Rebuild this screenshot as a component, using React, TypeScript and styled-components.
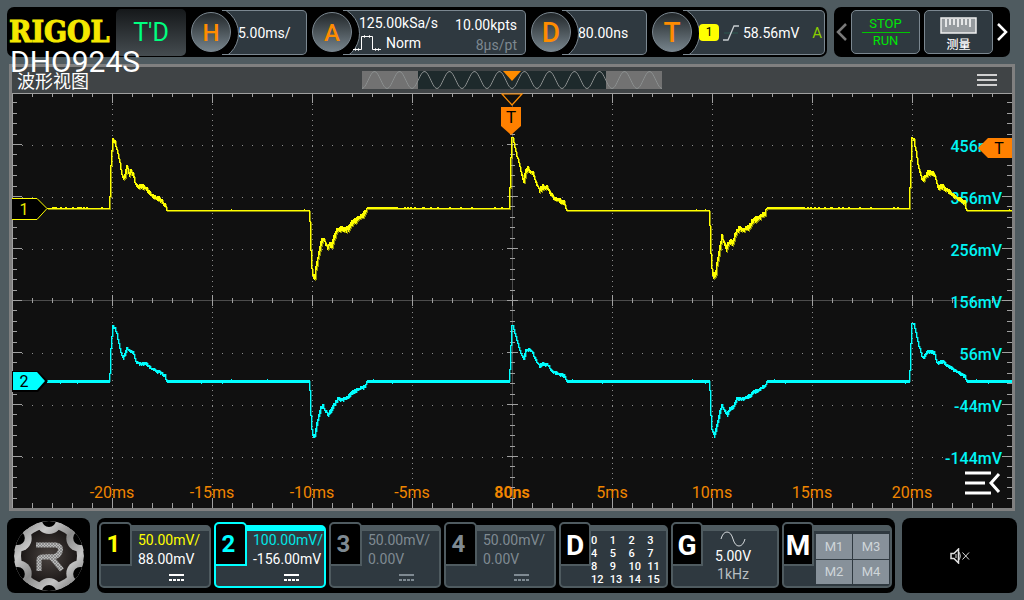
import React from "react";
import styled, { createGlobalStyle } from "styled-components";

const GlobalStyle = createGlobalStyle`
  * { box-sizing: border-box; }
  body {
    margin: 0;
    background: #4f5b60;
    color: #fff;
    font-family: Roboto, "Noto Sans CJK SC", sans-serif;
    font-size: 14px;
  }
  button {
    margin: 0;
    padding: 0;
    border: 0;
    background: none;
    color: inherit;
    font: inherit;
    text-align: left;
    cursor: pointer;
  }
  svg { display: block; flex: none; }
`;

const ORANGE = "#ff8c00";
const PANEL = "#2f3940";
const EDGE = "#7b8790";
const FRAME = "#4f5b60";

/* ---------- page ---------- */

const Page = styled.div`
  min-width: 1000px;
  padding: 7px;
  display: flex;
  flex-direction: column;
  gap: 7px;
`;

const TopRow = styled.header`
  display: flex;
  gap: 7px;
  padding-right: 7px;
`;

const StatusBar = styled.div`
  flex: 1;
  min-width: 0;
  display: flex;
  align-items: center;
  gap: 5px;
  height: 50px;
  padding-right: 2px;
  background: #000;
  border-radius: 7px;
`;

const Brand = styled.div`
  position: relative;
  width: 104px;
  padding-left: 2px;
  font: bold 30px/36px "DejaVu Serif Condensed", "DejaVu Serif", serif;
  font-stretch: condensed;
  color: #f4e800;
  -webkit-text-stroke: 1px #f4e800;
`;

const Model = styled.span`
  position: absolute;
  z-index: 2;
  top: 33px;
  left: 3px;
  font: 400 30px/30px Roboto, sans-serif;
  color: #fff;
  -webkit-text-stroke: 0;
`;

const TriggerState = styled.button`
  width: 70px;
  height: 47px;
  border-radius: 5px;
  background: linear-gradient(#15181a, #454c50);
  color: #00ff7f;
  font-size: 25px;
  text-align: center;
`;

const SegmentButton = styled.button<{ $grow: number }>`
  flex: ${(p) => p.$grow} 1 0;
  min-width: 0;
  display: flex;
  align-items: center;
`;

const Knob = styled.span<{ $size: number }>`
  position: relative;
  z-index: 1;
  flex: none;
  width: 40px;
  height: 40px;
  border: 1px solid ${EDGE};
  border-radius: 50%;
  background: linear-gradient(#22272a, #76838b);
  color: ${ORANGE};
  font-size: ${(p) => p.$size}px;
  font-weight: 500;
  line-height: 40px;
  text-align: center;
`;

const Field = styled.span`
  position: relative;
  flex: 1;
  min-width: 0;
  height: 45px;
  margin-left: -9px;
  padding: 1px 8px 0 16px;
  display: flex;
  align-items: center;
  justify-content: space-between;
  overflow: hidden;
  background: ${PANEL};
  border: 1px solid ${EDGE};
  border-left: 0;
  border-radius: 0 5px 5px 0;
  white-space: nowrap;

  &::before {
    content: "";
    position: absolute;
    top: -5px;
    left: -38px;
    width: 53px;
    height: 53px;
    border: 1px solid ${EDGE};
    border-radius: 50%;
    background: #000;
  }
`;

const Readings = styled.span<{ $end?: boolean }>`
  position: relative;
  display: flex;
  flex-direction: column;
  align-items: ${(p) => (p.$end ? "flex-end" : "flex-start")};
  padding-top: ${(p) => (p.$end ? 4 : 0)}px;
  line-height: 20px;
`;

const ModeLine = styled.span`
  display: flex;
  align-items: center;
  gap: 5px;
  margin-left: -6px;
`;

const Dim = styled.span`
  color: #7d8890;
`;

const SourceTag = styled.span`
  position: relative;
  width: 20px;
  height: 17px;
  border-radius: 4px;
  background: #ff0;
  color: #000;
  font-size: 12px;
  line-height: 17px;
  text-align: center;
`;

const SweepMode = styled.span`
  margin-left: auto;
  color: #8ccc00;
  font-size: 15px;
`;

const TriggerField = styled(Field)`
  padding-right: 2px;
  justify-content: flex-start;
  gap: 4px;
`;

const ActionBar = styled.nav`
  flex: 0 0 176px;
  height: 50px;
  display: flex;
  align-items: center;
  gap: 4px;
  padding: 0 2px;
  background: #000;
  border-radius: 7px;
`;

const ActionButton = styled.button`
  flex: 1;
  height: 44px;
  padding-top: 6px;
  display: flex;
  flex-direction: column;
  align-items: center;
  justify-content: center;
  gap: 3px;
  border: 1px solid ${EDGE};
  border-radius: 5px;
  background: ${PANEL};
  font-size: 12px;
  font-weight: 500;
  line-height: 16px;
`;

const RunButton = styled(ActionButton)`
  padding-top: 1px;
  gap: 0;
  color: #00e606;
  font-size: 13px;
  font-weight: 400;
`;

const RunRule = styled.span`
  width: 48px;
  height: 1px;
  background: #00c800;
`;

/* ---------- waveform panel ---------- */

const Scope = styled.main`
  margin: 0 2px;
  border: 3px solid #808080;
  background: #101010;
`;

const ScopeHead = styled.div`
  height: 26px;
  display: grid;
  grid-template-columns: 1fr 300px 1fr;
  align-items: center;
  background: #404446;
`;

const ScopeTitle = styled.h1`
  margin: 0;
  padding-left: 5px;
  font: 400 18px/26px "Noto Sans CJK SC", sans-serif;
`;

const HeadMenu = styled.button`
  justify-self: end;
  padding-right: 15px;
`;

const Plot = styled.div`
  position: relative;
`;

const PlotMenu = styled.button`
  position: absolute;
  right: 11px;
  bottom: 12px;
`;

/* ---------- bottom row ---------- */

const BottomRow = styled.footer`
  display: flex;
  gap: 7px;
  height: 75px;
`;

const Tile = styled.button<{ $width: number }>`
  flex: 0 0 ${(p) => p.$width}px;
  display: flex;
  align-items: center;
  justify-content: center;
  border-radius: 8px;
  background: #000;
`;

const Channels = styled.div`
  flex: 1;
  display: grid;
  grid-template-columns: repeat(4, 112fr) 109fr 108fr 110fr;
  gap: 3px;
  padding: 4px 3px 5px 2px;
  border-radius: 8px;
  background: #000;
`;

const Card = styled.button<{ $edge?: string }>`
  position: relative;
  min-width: 0;
  padding-top: 3px;
  display: flex;
  --edge: ${(p) => p.$edge ?? FRAME};
`;

const CardTab = styled.span<{ $color: string; $large?: boolean }>`
  position: absolute;
  top: 0;
  left: 0;
  width: ${(p) => (p.$large ? 32 : 33)}px;
  height: 44px;
  padding-right: ${(p) => (p.$large ? 0 : 4)}px;
  border: 2px solid var(--edge);
  border-radius: 5px 5px 0 0;
  background: #000;
  color: ${(p) => p.$color};
  font-size: ${(p) => (p.$large ? 28 : 24)}px;
  font-weight: 700;
  line-height: ${(p) => (p.$large ? 44 : 40)}px;
  text-align: center;
`;

const CardBody = styled.span`
  flex: 1;
  min-width: 0;
  height: 63px;
  border: 2px solid var(--edge);
  border-top-width: 6px;
  border-radius: 5px;
  background: ${PANEL};
  line-height: 19px;
  white-space: nowrap;
`;

const ChannelBody = styled(CardBody)`
  padding-left: 37px;
  display: flex;
  flex-direction: column;
`;

const Reading = styled.span<{ $color: string }>`
  color: ${(p) => p.$color};
`;

const Coupling = styled.span`
  padding: 4px 0 0 31px;
`;

const DigitalBody = styled(CardBody)`
  padding: 3px 0 0 30px;
  display: grid;
  grid-template-columns: repeat(4, 1fr);
  align-content: start;
  font-size: 11px;
  font-weight: 500;
  line-height: 13px;
`;

const GeneratorBody = styled(CardBody)`
  padding-left: 16px;
  display: flex;
  flex-direction: column;
  align-items: center;
  line-height: 18px;
`;

const MathBody = styled(CardBody)`
  padding: 3px 1px 2px 32px;
  display: grid;
  grid-template-columns: 1fr 1fr;
  gap: 1px;
`;

const MathCell = styled.span`
  display: flex;
  align-items: center;
  justify-content: center;
  background: #87919a;
  color: #cfd5d9;
  font-size: 13px;
`;

/* ---------- waveform data ---------- */

type Pt = [number, number];

const BASE1 = 115;
const BASE2 = 288;

/* Each burst is a list of (dx, dy) steps from the start of its edge. */
const yellowBursts: { at: number; pts: Pt[] }[] = [
  { at: 97, pts: [[0, 0], [1, -12], [2, -43], [3, -58], [4, -67], [6, -67], [7, -60], [9, -53], [11, -44], [12, -36], [14, -30], [16, -33], [18, -41], [19, -38], [20, -32], [22, -36], [24, -33], [26, -25], [29, -21], [33, -22], [37, -19], [41, -14], [45, -10], [50, -9], [54, -5], [57, -2], [58, 2]] },
  { at: 297, pts: [[0, 2], [1, 13], [2, 42], [3, 60], [4, 69], [6, 69], [7, 60], [9, 50], [11, 40], [13, 32], [15, 32], [18, 40], [20, 37], [23, 37], [25, 30], [28, 22], [32, 21], [35, 22], [39, 21], [43, 15], [49, 10], [54, 7], [57, 3], [58, 0]] },
  { at: 497, pts: [[0, 0], [1, -21], [2, -51], [3, -71], [4, -69], [7, -55], [10, -43], [12, -35], [14, -27], [15, -28], [17, -36], [19, -40], [21, -37], [24, -34], [27, -24], [30, -18], [34, -21], [38, -20], [42, -14], [46, -9], [51, -7], [55, -5], [57, 0], [58, 2]] },
  { at: 697, pts: [[0, 2], [1, 17], [2, 45], [3, 60], [4, 69], [7, 64], [9, 50], [11, 40], [13, 29], [15, 35], [17, 41], [19, 36], [22, 34], [24, 35], [27, 25], [30, 20], [34, 22], [39, 20], [44, 13], [51, 9], [56, 6], [57, 1], [58, 0]] },
  { at: 897, pts: [[0, 0], [1, -21], [2, -48], [3, -71], [5, -67], [7, -56], [9, -42], [12, -30], [14, -27], [16, -31], [19, -35], [23, -35], [26, -31], [29, -20], [34, -21], [38, -18], [42, -14], [47, -10], [52, -8], [56, -5], [57, 0], [58, 2]] },
];

const cyanBursts: { at: number; pts: Pt[] }[] = [
  { at: 97, pts: [[0, 0], [1, -8], [2, -33], [3, -45], [4, -54], [6, -53], [8, -46], [10, -36], [12, -27], [14, -23], [16, -27], [18, -33], [20, -30], [24, -28], [27, -19], [30, -17], [37, -17], [41, -13], [46, -10], [52, -8], [56, -5], [58, 0]] },
  { at: 297, pts: [[0, 0], [1, 9], [2, 34], [3, 48], [4, 55], [6, 55], [8, 43], [10, 34], [12, 27], [14, 25], [16, 30], [19, 34], [22, 30], [25, 24], [29, 18], [33, 19], [38, 17], [43, 12], [50, 8], [56, 6], [58, 0]] },
  { at: 497, pts: [[0, 0], [1, -12], [2, -36], [3, -56], [4, -54], [7, -44], [10, -32], [13, -24], [15, -23], [17, -30], [20, -32], [23, -29], [27, -20], [30, -15], [34, -17], [38, -16], [43, -10], [49, -7], [55, -5], [58, 0]] },
  { at: 697, pts: [[0, 0], [1, 9], [2, 34], [3, 48], [5, 55], [7, 49], [9, 40], [11, 31], [13, 25], [15, 29], [18, 34], [21, 28], [24, 27], [28, 18], [33, 18], [38, 17], [44, 12], [51, 8], [56, 5], [58, 0]] },
  { at: 897, pts: [[0, 0], [1, -11], [2, -38], [3, -58], [5, -56], [7, -48], [10, -34], [13, -24], [15, -23], [18, -29], [22, -29], [25, -28], [28, -18], [34, -19], [40, -14], [46, -10], [52, -7], [56, -4], [58, 0]] },
];

const noise = (n: number) => {
  const s = Math.sin(n * 12.9898) * 43758.5453;
  return s - Math.floor(s);
};

/* Steps one column at a time; the decaying part of each burst is drawn as
   short vertical bars whose length varies with the noise. */
function tracePath(base: number, bursts: { at: number; pts: Pt[] }[], settle: number, jitter: number) {
  let d = `M35 ${base}.5`;
  for (const burst of bursts) {
    const start = burst.at + 0.5;
    d += `H${start}`;
    for (let i = 1; i < burst.pts.length; i++) {
      const [x0, y0] = burst.pts[i - 1];
      const [x1, y1] = burst.pts[i];
      for (let x = x0 + 1; x <= x1; x++) {
        const y = Math.round(base + y0 + ((y1 - y0) * (x - x0)) / (x1 - x0));
        if (x > 3 && x < 57) {
          const up = 1 + Math.round(noise(burst.at + x) * jitter);
          const down = 1 + Math.round(noise(burst.at + x + 400) * jitter);
          d += `V${y - up}H${start + x}V${y + down}`;
        } else {
          d += `V${y}H${start + x}`;
        }
      }
    }
    const level = burst.pts[burst.pts.length - 1][1] > 0 ? settle : 0;
    d += `V${base + level}.5`;
  }
  return d + "H1000";
}

const yellowPath = tracePath(BASE1, yellowBursts, 2, 2);
const cyanPath = tracePath(BASE2, cyanBursts, 0, 1);

const yellowUp = [40, 42, 43, 48, 53, 60, 65, 67, 68, 71, 74, 89, 392, 395, 398, 402, 410, 411, 418, 425, 437, 448, 459, 482, 489, 795, 798, 802, 806, 812, 818, 819, 826, 830, 836, 847, 858, 881, 885];
const yellowLow = [219, 292, 684, 693, 970, 997];
const cyanUp = [219, 255, 361, 560, 680, 762, 964];
const cyanDown = [48, 65, 189, 210, 380, 590, 693, 773, 893, 976];

/* ---------- drawings ---------- */

const span = (n: number) => Array.from({ length: n }, (_, i) => i);
const ROWS = [51, 103, 155, 207, 259, 311, 363];

function Graticule() {
  let ticks = "";
  for (const i of span(51)) {
    const x = i * 20 + 0.5;
    const long = i % 5 === 0;
    ticks += `M${x} 0v${long ? 10 : 4}M${x} 415v${long ? -10 : -5}`;
    ticks += `M${x} ${long ? 202 : 205}v${long ? 11 : 5}`;
  }
  for (const i of span(41)) {
    const y = Math.round(i * 10.4 - 1) + 0.5;
    const long = i % 5 === 0;
    ticks += `M0 ${y}h${long ? 10 : 5}M1000 ${y}h${long ? -10 : -5}`;
    ticks += `M${long ? 495 : 498} ${y}h${long ? 11 : 5}`;
  }
  let dots = "";
  for (const y of ROWS.filter((r) => r !== 207)) {
    for (const i of span(93)) dots += `M${10 + i * 10} ${y + 1.5}h1`;
  }
  for (const i of span(9)) {
    if (i === 4) continue;
    for (const k of span(77)) dots += `M${100 + i * 100} ${Math.round(11 + k * 5.2) + 0.5}h1`;
  }
  return (
    <g fill="none" shapeRendering="crispEdges">
      <path d="M0 207.5H1000M500.5 0V415" stroke="#4c4c4c" />
      <path d={dots} stroke="#8c8c8c" />
      <path d={ticks} stroke="#a0a0a0" />
      <path d="M0 .5H1000M.5 0V415" stroke="#a0a0a0" />
    </g>
  );
}

const VOLTS = ["456mV", "356mV", "256mV", "156mV", "56mV", "-44mV", "-144mV"];
const TIMES = ["-20ms", "-15ms", "-10ms", "-5ms", "80ns", "5ms", "10ms", "15ms", "20ms"];

function Waveforms() {
  return (
    <svg viewBox="0 0 1000 415" width="100%" role="img" aria-label="CH1, CH2" fontFamily="Roboto, sans-serif">
      <Graticule />
      <g fill="#00f5f5" fontSize="16" fontWeight="500" textAnchor="end">
        {VOLTS.map((v, i) => (
          <text key={v} x="990" y={59 + i * 52}>{v}</text>
        ))}
      </g>
      <g fill="#f08600" fontSize="16" textAnchor="middle">
        {TIMES.map((t, i) => (
          <text key={t} x={100 + i * 100} y="405" fontWeight={i === 4 ? 700 : 400}>{t}</text>
        ))}
      </g>

      <g fill="none" shapeRendering="crispEdges">
        <path d={cyanPath} stroke="#00ffff" transform="translate(1 0)" strokeOpacity=".4" />
        <path d={cyanPath} stroke="#00ffff" />
        <path
          d="M35 288.5H98M155 288.5H298M355 288.5H498M555 288.5H698M755 288.5H898M955 288.5H1000"
          stroke="#00ffff"
          strokeWidth="3"
        />
        <path d={cyanUp.map((x) => `M${x} 286.5h1`).join("") + cyanDown.map((x) => `M${x} 290.5h1`).join("")} stroke="#00ffff" />
        <path d={yellowPath} stroke="#ffff00" transform="translate(1 1)" strokeOpacity=".5" />
        <path d={yellowPath} stroke="#ffff00" />
        <path
          d={"M355 114.5H386M755 114.5H793" + yellowUp.map((x) => `M${x} 114.5h2`).join("") + yellowLow.map((x) => `M${x} 116.5h1`).join("")}
          stroke="#ffff00"
          strokeWidth="2"
        />
      </g>

      <path d="M490 1H510L500 12Z" fill="#101010" stroke={ORANGE} strokeWidth="1.2" />
      <path d="M489 14H509V33L499 42L489 33Z" fill="#ff8000" />
      <text x="499" y="30" fontSize="17" fill="#000" textAnchor="middle">T</text>

      <path d="M0 105.5H25L35 115.5L25 126.5H0" fill="#000" stroke="#ffff00" />
      <text x="12" y="122" fontSize="16" fill="#e8e800" textAnchor="middle">1</text>

      <path d="M0 278H26L36 288L26 299H0Z" fill="#000" />
      <path d="M1 279H25L33 288L25 297H1Z" fill="#00ffff" />
      <text x="12" y="294" fontSize="16" fill="#000" textAnchor="middle">2</text>

      <path d="M1000 45V65H976L966 55L976 45Z" fill="#ff8000" />
      <text x="987" y="61" fontSize="16" fill="#000" textAnchor="middle">T</text>
    </svg>
  );
}

function MemoryStrip() {
  let d = "M-1 9";
  for (let x = 0; x <= 300; x++) d += `L${x} ${(9 - 8.5 * Math.cos(((x - 12.5) / 25) * 2 * Math.PI)).toFixed(1)}`;
  return (
    <svg width="300" height="18" viewBox="0 0 300 18">
      <rect width="300" height="18" fill="#727272" />
      <rect x="56" width="188" height="18" fill="#1e2a2c" />
      <path d={d} fill="none" stroke="#8c9090" />
      <path d="M141 0H159L150 10Z" fill={ORANGE} />
    </svg>
  );
}

const PulseIcon = () => (
  <svg width="28" height="16" viewBox="0 0 28 16" fill="none" stroke="#fff">
    <path d="M0 14.5H8.5V1.5H19.5V14.5H28" />
    <path d="M2.5 13V16M5.5 13V16M11.5 0V3M16.5 0V3M22.5 13V16M25.5 13V16" strokeOpacity=".7" />
  </svg>
);

const SlopeIcon = () => (
  <svg width="16" height="16" viewBox="0 0 16 16" fill="none">
    <path d="M1 8H15" stroke="#2c5a50" />
    <path d="M0 15H5L11 1H16" stroke="#c8cdd0" strokeWidth="1.3" />
  </svg>
);

const RulerIcon = () => (
  <svg width="37" height="17" viewBox="0 0 37 17">
    <rect x="1" y="1" width="35" height="15" fill="#969b9f" stroke="#f0f0f0" strokeWidth="1.5" />
    <path d="M6 2V10M10 2V8M14 2V8M18 2V10M22 2V8M26 2V8M30 2V10" stroke="#fff" strokeWidth="1.5" />
  </svg>
);

const Chevron = ({ left, color }: { left?: boolean; color: string }) => (
  <svg width="11" height="20" viewBox="0 0 11 20" fill="none" stroke={color} strokeWidth="2.5">
    <path d={left ? "M10 2L2 10L10 18" : "M1 2L9 10L1 18"} />
  </svg>
);

const DcIcon = ({ color }: { color: string }) => (
  <svg width="15" height="8" viewBox="0 0 15 8" stroke={color} strokeWidth="2">
    <path d="M0 2H15" />
    <path d="M0 7H15" strokeDasharray="3 1" />
  </svg>
);

function GearLogo() {
  const notches = span(6).map((i) => {
    const a = ((i * 60 - 90) * Math.PI) / 180;
    return [Math.cos(a), Math.sin(a)];
  });
  return (
    <svg width="72" height="72" viewBox="-36 -36 72 72">
      <defs>
        <linearGradient id="steel" gradientUnits="userSpaceOnUse" x1="-30" y1="-30" x2="30" y2="30">
          <stop offset="0" stopColor="#8e8e8e" />
          <stop offset=".25" stopColor="#c8c8c8" />
          <stop offset=".5" stopColor="#8a8a8a" />
          <stop offset=".75" stopColor="#c4c4c4" />
          <stop offset="1" stopColor="#7c7c7c" />
        </linearGradient>
        <radialGradient id="core" gradientUnits="userSpaceOnUse" cx="0" cy="0" r="28">
          <stop offset="0" stopColor="#4a4340" />
          <stop offset="1" stopColor="#1c1817" />
        </radialGradient>
        <pattern id="mesh" width="3" height="3" patternUnits="userSpaceOnUse">
          <rect width="3" height="3" fill="#b8b8b8" />
          <path d="M0 0L3 3M3 0L0 3" stroke="#707070" strokeWidth=".6" />
        </pattern>
        <clipPath id="disc"><circle r="35" /></clipPath>
      </defs>
      <g clipPath="url(#disc)">
        <circle r="35" fill="url(#steel)" />
        <circle r="28" fill="url(#core)" />
        {notches.map(([x, y], i) => (
          <circle key={i} cx={x * 35} cy={y * 35} r="13" fill="url(#steel)" />
        ))}
        {notches.map(([x, y], i) => (
          <circle key={i} cx={x * 36} cy={y * 36} r="7" fill="#000" />
        ))}
      </g>
      <g fill="none" stroke="url(#mesh)" strokeWidth="5">
        <path d="M-13 -11H7Q13 -10 11 -4Q9 1 2 1L13 14" />
        <path d="M-10 15V4Q-10 1 -6 1H3" />
      </g>
    </svg>
  );
}

const MuteIcon = () => (
  <svg width="20" height="16" viewBox="0 0 20 16" fill="none" stroke="#e0e0e0" strokeWidth="1.5">
    <path d="M1 5.5V10.5H4L8.5 15V1L4 5.5Z" />
    <path d="M6 6V10M8.500 3.500Q12 8 8.500 12.500" strokeWidth="1" />
    <path d="M12.500 4.500L19 11.500M19 4.500L12.500 11.500" strokeWidth="1" />
  </svg>
);

/* ---------- parts ---------- */

interface ChannelProps {
  id: string;
  color: string;
  scaleColor?: string;
  valueColor?: string;
  edge?: string;
  scale: string;
  offset: string;
}

const Channel = ({ id, color, scaleColor = color, valueColor = color, edge, scale, offset }: ChannelProps) => (
  <Card $edge={edge}>
    <ChannelBody>
      <Reading $color={scaleColor}>{scale}</Reading>
      <Reading $color={valueColor}>{offset}</Reading>
      <Coupling><DcIcon color={valueColor} /></Coupling>
    </ChannelBody>
    <CardTab $color={color}>{id}</CardTab>
  </Card>
);

export default function App() {
  return (
    <>
      <GlobalStyle />
      <Page>
        <TopRow>
          <StatusBar>
            <Brand>
              RIGOL
              <Model>DHO924S</Model>
            </Brand>
            <TriggerState>T'D</TriggerState>
            <SegmentButton $grow={116}>
              <Knob $size={24}>H</Knob>
              <Field>5.00ms/</Field>
            </SegmentButton>
            <SegmentButton $grow={214}>
              <Knob $size={24}>A</Knob>
              <Field>
                <Readings>
                  <span>125.00kSa/s</span>
                  <ModeLine><PulseIcon />Norm</ModeLine>
                </Readings>
                <Readings $end>
                  <span>10.00kpts</span>
                  <Dim>8µs/pt</Dim>
                </Readings>
              </Field>
            </SegmentButton>
            <SegmentButton $grow={116}>
              <Knob $size={28}>D</Knob>
              <Field>80.00ns</Field>
            </SegmentButton>
            <SegmentButton $grow={173}>
              <Knob $size={28}>T</Knob>
              <TriggerField>
                <SourceTag>1</SourceTag>
                <SlopeIcon />
                <span>58.56mV</span>
                <SweepMode>A</SweepMode>
              </TriggerField>
            </SegmentButton>
          </StatusBar>
          <ActionBar>
            <button aria-label="Previous"><Chevron left color="#7a7a7a" /></button>
            <RunButton>
              STOP
              <RunRule />
              RUN
            </RunButton>
            <ActionButton>
              <RulerIcon />
              测量
            </ActionButton>
            <button aria-label="Next"><Chevron color="#fff" /></button>
          </ActionBar>
        </TopRow>

        <Scope>
          <ScopeHead>
            <ScopeTitle>波形视图</ScopeTitle>
            <MemoryStrip />
            <HeadMenu aria-label="Menu">
              <svg width="20" height="14" viewBox="0 0 20 14" stroke="#d0d0d0" strokeWidth="2">
                <path d="M0 2H20M0 7H20M0 12H20" />
              </svg>
            </HeadMenu>
          </ScopeHead>
          <Plot>
            <Waveforms />
            <PlotMenu aria-label="Results">
              <svg width="36" height="28" viewBox="0 0 36 28" fill="none" stroke="#fff" strokeWidth="3">
                <path d="M0 5H26M0 15H20M0 25H26M34 6L26 15L34 24" />
              </svg>
            </PlotMenu>
          </Plot>
        </Scope>

        <BottomRow>
          <Tile $width={83} aria-label="Home"><GearLogo /></Tile>
          <Channels>
            <Channel id="1" color="#ffff00" valueColor="#fff" scale="50.00mV/" offset="88.00mV" />
            <Channel id="2" color="#00ffff" scaleColor="#00e5e5" valueColor="#fff" edge="#00ffff" scale="100.00mV/" offset="-156.00mV" />
            <Channel id="3" color="#7f8a92" scale="50.00mV/" offset="0.00V" />
            <Channel id="4" color="#7f8a92" scale="50.00mV/" offset="0.00V" />
            <Card>
              <DigitalBody>
                {[0, 1, 2, 3, 4, 5, 6, 7, 8, 9, 10, 11, 12, 13, 14, 15].map((n) => (
                  <span key={n}>{n}</span>
                ))}
              </DigitalBody>
              <CardTab $color="#fff" $large>D</CardTab>
            </Card>
            <Card>
              <GeneratorBody>
                <svg width="26" height="16" viewBox="0 0 26 16" fill="none" stroke="#d5d9dc">
                  <path d="M1 8Q3 1 7 1T13 8T19 15T25 8" />
                </svg>
                <span>5.00V</span>
                <Reading $color="#b8bec2">1kHz</Reading>
              </GeneratorBody>
              <CardTab $color="#fff" $large>G</CardTab>
            </Card>
            <Card>
              <MathBody>
                <MathCell>M1</MathCell>
                <MathCell>M3</MathCell>
                <MathCell>M2</MathCell>
                <MathCell>M4</MathCell>
              </MathBody>
              <CardTab $color="#fff" $large>M</CardTab>
            </Card>
          </Channels>
          <Tile $width={115} aria-label="Sound off"><MuteIcon /></Tile>
        </BottomRow>
      </Page>
    </>
  );
}
